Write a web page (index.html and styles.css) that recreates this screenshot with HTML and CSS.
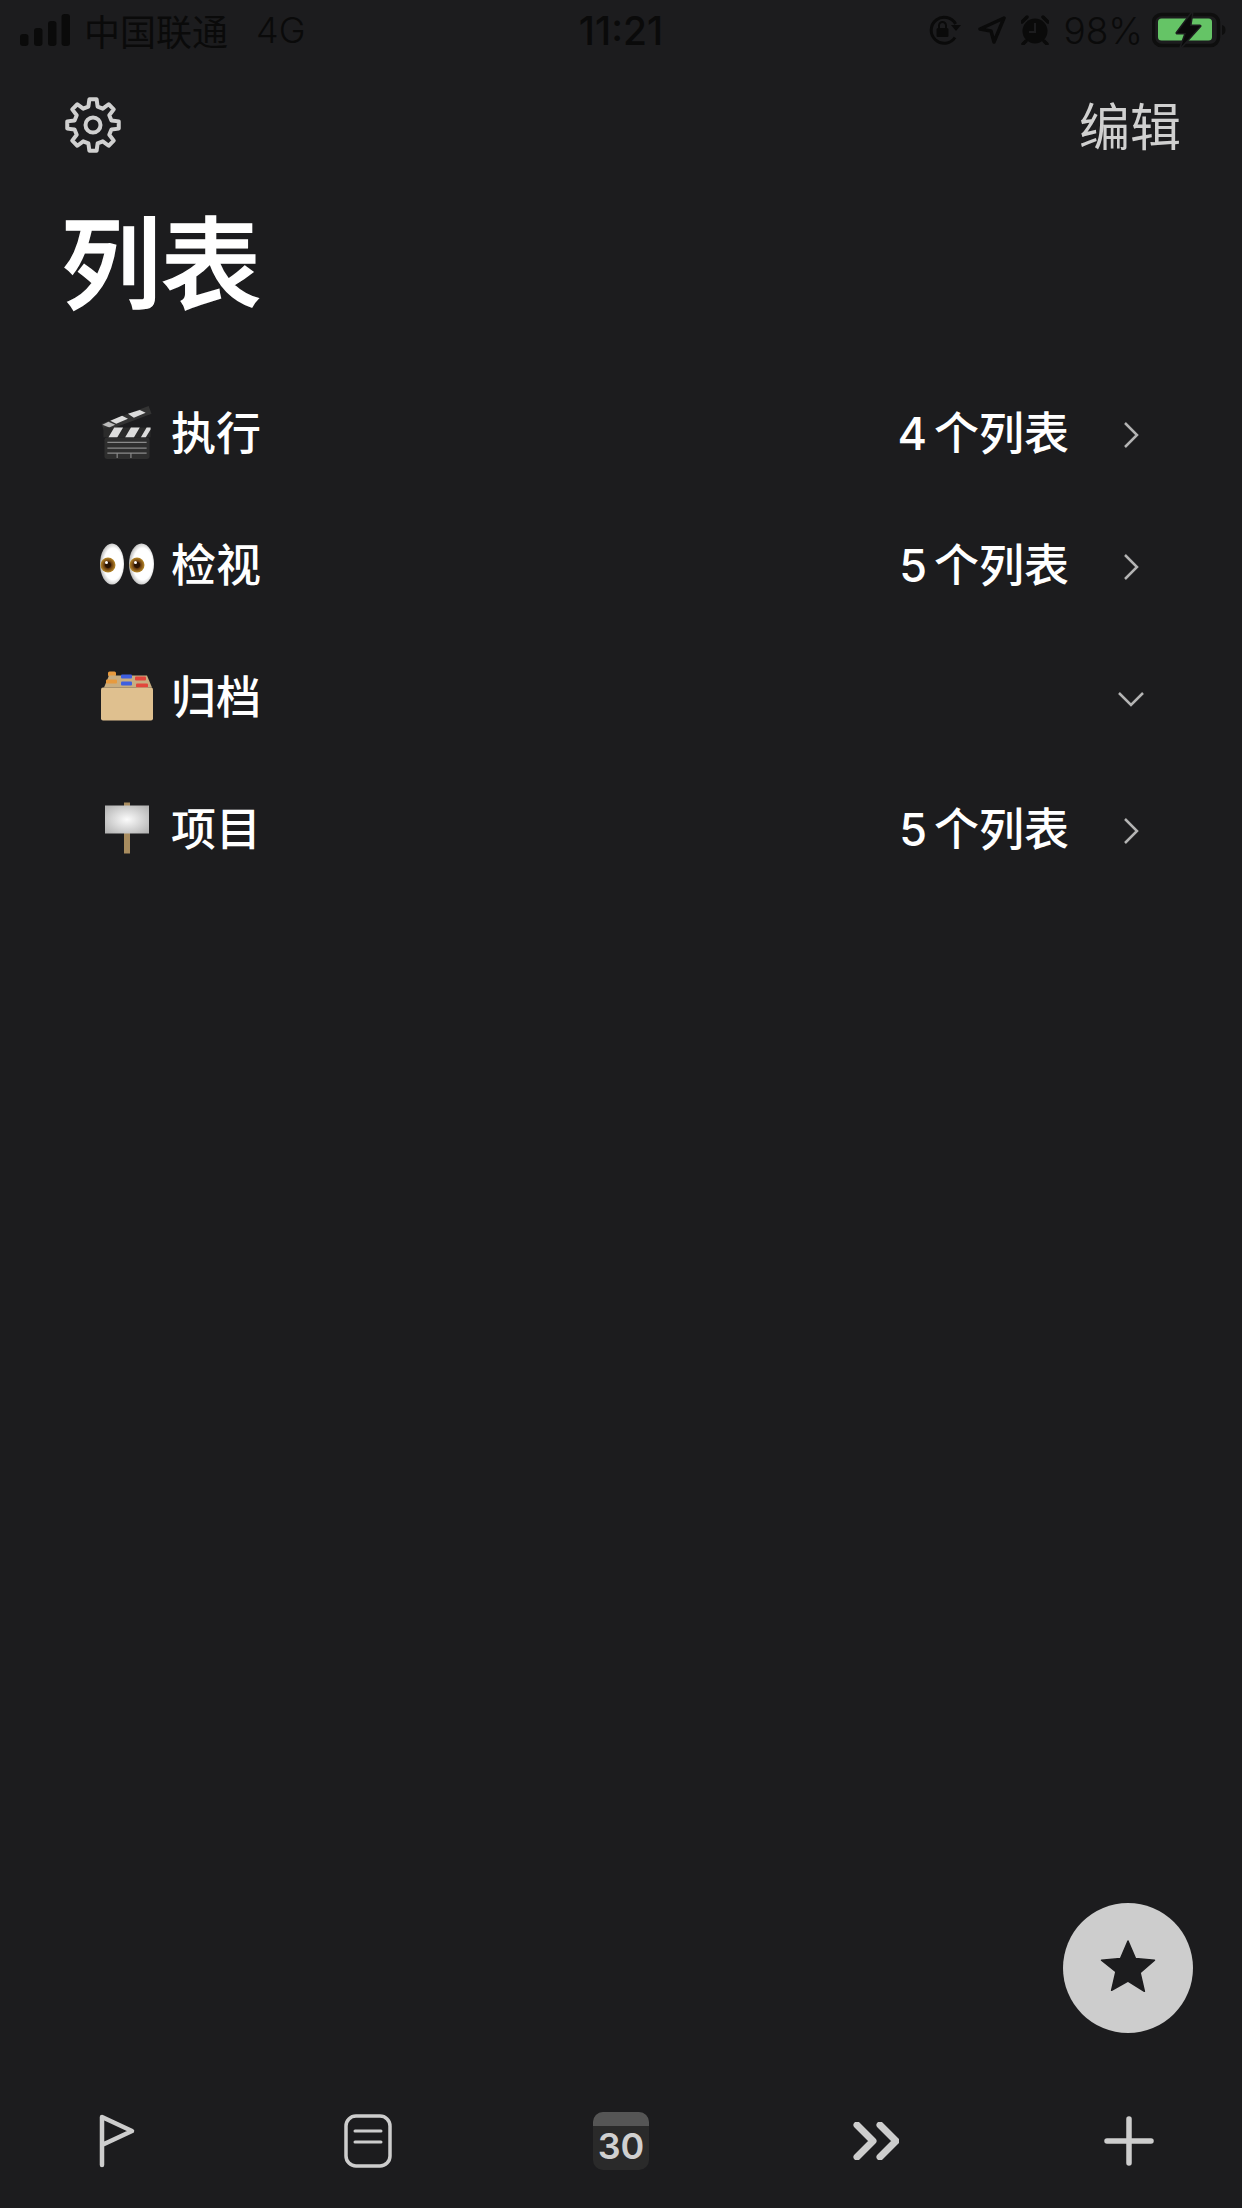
FILE: index.html
```html
<!DOCTYPE html>
<html lang="zh-CN">
<head>
    <meta charset="UTF-8">
    <meta name="viewport" content="width=device-width, initial-scale=1.0">
    <title>列表</title>
    <link rel="stylesheet" href="styles.css">
</head>
<body>
    <main class="app">
        <!-- status bar -->
        <header class="status">
            <div class="status-left">
                <svg class="signal" viewBox="0 0 50 32">
                    <rect x="0" y="20" width="8.500" height="12" rx="3"/>
                    <rect x="14" y="14" width="8.500" height="18" rx="3"/>
                    <rect x="28" y="7" width="8.500" height="25" rx="3"/>
                    <rect x="41.500" y="0" width="8.500" height="32" rx="3"/>
                </svg>
                <span class="carrier">中国联通</span>
                <span class="network">4G</span>
            </div>
            <div class="clock">11:21</div>
            <div class="status-right">
                <svg class="st-lock" viewBox="0 0 34 30">
                    <path d="M27 22.500A13 13 0 1 1 27.600 9" fill="none" stroke="#0a0a0a" stroke-width="3"/>
                    <path d="M23 10h10l-5 6z" fill="#0a0a0a"/>
                    <rect x="8.500" y="13" width="12" height="9" rx="1.500" fill="#0a0a0a"/>
                    <path d="M11 13v-2.500a3.500 3.500 0 0 1 7 0V13" fill="none" stroke="#0a0a0a" stroke-width="2"/>
                </svg>
                <svg class="st-loc" viewBox="0 0 28 28">
                    <path d="M26 2 2 13l11 2 3 11z" fill="none" stroke="#0a0a0a" stroke-width="3.500" stroke-linejoin="round"/>
                </svg>
                <svg class="st-alarm" viewBox="0 0 28 30">
                    <circle cx="14" cy="16" r="12.500" fill="#0a0a0a"/>
                    <path d="M1 7 6 2M27 7l-5-5M5 26l-3 3M23 26l3 3" stroke="#0a0a0a" stroke-width="3.500" stroke-linecap="round"/>
                    <path d="M14 8v9H8" fill="none" stroke="#1c1c1e" stroke-width="2"/>
                </svg>
                <span class="battery-pct">98%</span>
                <svg class="st-battery" viewBox="0 0 74 36">
                    <rect x="1.500" y="2.500" width="65" height="31" rx="8" fill="none" stroke="#0e0e0e" stroke-width="3.500"/>
                    <rect x="6" y="6.500" width="54" height="22" rx="3.500" fill="#65c466"/>
                    <path d="M70 13c2.500 .5 3.500 2.500 3.500 5s-1 4.500-3.500 5z" fill="#0e0e0e"/>
                    <path d="M40 1 25 21h9l-5 14 19-21H38z" fill="#0a0a0a" stroke="#1c1c1e" stroke-width="3" stroke-linejoin="round" paint-order="stroke"/>
                </svg>
            </div>
        </header>

        <!-- top nav -->
        <nav class="topnav">
            <svg class="gear" viewBox="-29 -29 58 58">
                <polygon points="18.44,-4.6 25.75,-3.62 25.75,3.62 18.44,4.6 16.29,9.79 20.77,15.65 15.65,20.77 9.79,16.29 4.6,18.44 3.62,25.75 -3.62,25.75 -4.6,18.44 -9.79,16.29 -15.65,20.77 -20.77,15.65 -16.29,9.79 -18.44,4.6 -25.75,3.62 -25.75,-3.62 -18.44,-4.6 -16.29,-9.79 -20.77,-15.65 -15.65,-20.77 -9.79,-16.29 -4.6,-18.44 -3.62,-25.75 3.62,-25.75 4.6,-18.44 9.79,-16.29 15.65,-20.77 20.77,-15.65 16.29,-9.79"/>
                <circle r="7.500"/>
            </svg>
            <span class="edit">编辑</span>
        </nav>

        <h1 class="title">列表</h1>

        <ul class="groups">
            <li class="group">
                <svg class="emoji" viewBox="0 0 54 55">
                    <path d="M1 19 49 1l3 8L4 27z" fill="#333"/>
                    <path d="M10 16l12-5 6 3-12 5zM28 9l12-4 6 3-12 5z" fill="#ddd"/>
                    <path d="M2 20l7 3 6-3-7-3z" fill="#bbb"/>
                    <rect x="3" y="23" width="48" height="10" fill="#2b2b2b"/>
                    <path d="M8 33l6-10h9l-6 10zM25 33l6-10h9l-6 10zM41 33l6-10h4v2l-5 8z" fill="#ddd"/>
                    <rect x="4" y="33" width="46" height="22" rx="3" fill="#2e2e2e"/>
                    <path d="M7 38h40M7 44h40M7 49h40M17 49v5M31 49v5" stroke="#8a8a8a" stroke-width="1.200"/>
                </svg>
                <span class="group-name">执行</span>
                <span class="group-count">4 个列表</span>
                <svg class="chev" viewBox="0 0 30 28"><path d="M9 2l12 12L9 26"/></svg>
            </li>
            <li class="group">
                <svg class="emoji" viewBox="0 0 54 42">
                    <defs>
                        <radialGradient id="eyeball" cx="55%" cy="50%" r="55%">
                            <stop offset="70%" stop-color="#fff"/>
                            <stop offset="100%" stop-color="#b5b5b5"/>
                        </radialGradient>
                        <radialGradient id="iris" cx="50%" cy="50%" r="50%">
                            <stop offset="35%" stop-color="#2a1505"/>
                            <stop offset="50%" stop-color="#6a3d10"/>
                            <stop offset="100%" stop-color="#b98a2a"/>
                        </radialGradient>
                    </defs>
                    <ellipse cx="12" cy="21" rx="12" ry="20.500" fill="url(#eyeball)"/>
                    <ellipse cx="41.500" cy="21" rx="12.500" ry="20.500" fill="url(#eyeball)"/>
                    <circle cx="8" cy="22" r="7.500" fill="url(#iris)"/>
                    <circle cx="37" cy="22" r="7.500" fill="url(#iris)"/>
                    <circle cx="6.500" cy="19.500" r="1.500" fill="#fff"/>
                    <circle cx="35.500" cy="19.500" r="1.500" fill="#fff"/>
                </svg>
                <span class="group-name">检视</span>
                <span class="group-count">5 个列表</span>
                <svg class="chev" viewBox="0 0 30 28"><path d="M9 2l12 12L9 26"/></svg>
            </li>
            <li class="group">
                <svg class="emoji emoji-box" viewBox="0 0 52 49">
                    <rect x="7" y="0" width="8" height="5" rx="1.500" fill="#e79a3e"/>
                    <path d="M3 16 8 4h38l5 12z" fill="#c8ad80"/>
                    <rect x="20" y="3" width="11" height="4" rx="1" fill="#3f5fe0"/>
                    <rect x="34" y="5" width="11" height="4" rx="1" fill="#e2463c"/>
                    <rect x="5" y="8" width="11" height="4" rx="1" fill="#e79a3e"/>
                    <rect x="20" y="10" width="11" height="4" rx="1" fill="#3f5fe0"/>
                    <rect x="35" y="12" width="12" height="4" rx="1" fill="#e2463c"/>
                    <rect x="0" y="16" width="52" height="33" rx="2" fill="#dfc08f"/>
                </svg>
                <span class="group-name">归档</span>
                <svg class="chev chev-down" viewBox="0 0 30 28"><path d="M3 8l12 12L27 8"/></svg>
            </li>
            <li class="group">
                <svg class="emoji emoji-sign" viewBox="0 0 44 51">
                    <defs>
                        <radialGradient id="board" cx="50%" cy="50%" r="65%">
                            <stop offset="0%" stop-color="#fbfbfb"/>
                            <stop offset="100%" stop-color="#b4b4b4"/>
                        </radialGradient>
                    </defs>
                    <rect x="19" y="0" width="6" height="51" fill="#a88c5f"/>
                    <rect x="0" y="3" width="44" height="28" fill="url(#board)"/>
                </svg>
                <span class="group-name">项目</span>
                <span class="group-count">5 个列表</span>
                <svg class="chev" viewBox="0 0 30 28"><path d="M9 2l12 12L9 26"/></svg>
            </li>
        </ul>

        <button class="fab">
            <svg viewBox="0 0 56 54"><path d="M28 1l7.500 17.500 19 1.700-14.400 12.500 4.300 18.600L28 41l-16.400 9.300 4.300-18.600L1.500 20.200l19-1.700z" fill="#1c1c1e" stroke="#1c1c1e" stroke-width="1.500" stroke-linejoin="round"/></svg>
        </button>

        <!-- tab bar -->
        <footer class="tabbar">
            <div class="tab">
                <svg class="tab-flag" viewBox="0 0 36 54"><path d="M3 51V3l30 14L3 31"/></svg>
            </div>
            <div class="tab tab-nudge">
                <svg class="tab-doc" viewBox="0 0 48 54">
                    <rect x="2" y="2" width="44" height="50" rx="10"/>
                    <path class="doc-lines" d="M11 17h26M11 28h26"/>
                </svg>
            </div>
            <div class="tab tab-nudge">
                <div class="cal">
                    <div class="cal-head"></div>
                    <div class="cal-day">30</div>
                </div>
            </div>
            <div class="tab">
                <svg class="tab-more" viewBox="0 0 46 38"><path d="M4 3l16 16L4 35M27 3l16 16-16 16"/></svg>
            </div>
            <div class="tab">
                <svg class="tab-plus" viewBox="0 0 50 50"><path d="M25 3v44M3 25h44"/></svg>
            </div>
        </footer>
    </main>
</body>
</html>
```

FILE: styles.css
```css
html, body {
    margin: 0;
    padding: 0;
}
body {
    background-color: #1c1c1e;
    font-family: "Inter", "Noto Sans CJK SC", sans-serif;
}
.app {
    position: relative;
    display: flex;
    flex-direction: column;
    width: 1242px;
    height: 2208px;
    overflow: hidden;
    background-color: #1c1c1e;
}

/* status bar */
.status {
    display: flex;
    align-items: center;
    justify-content: space-between;
    height: 60px;
    padding: 0 16px 0 20px;
    color: #0a0a0a;
    font-size: 36px;
}
.status-left, .status-right {
    display: flex;
    align-items: center;
    width: 400px;
}
.status-right {
    justify-content: flex-end;
}
.signal {
    width: 50px;
    height: 32px;
    fill: #0a0a0a;
}
.carrier {
    margin-left: 14px;
    font-family: "Noto Sans CJK SC", sans-serif;
    font-size: 36px;
    font-weight: 400;
}
.network {
    margin-left: 28px;
    font-weight: 300;
}
.clock {
    margin-right: 4px;
    font-size: 39px;
    font-weight: 500;
}
.st-lock {
    width: 34px;
    height: 30px;
}
.st-loc {
    width: 28px;
    height: 28px;
    margin-left: 16px;
}
.st-alarm {
    width: 28px;
    height: 30px;
    margin-left: 15px;
}
.battery-pct {
    margin-left: 14px;
    font-size: 37px;
    font-weight: 300;
}
.st-battery {
    width: 74px;
    height: 36px;
    margin-left: 9px;
}

/* nav + title */
.topnav {
    display: flex;
    align-items: center;
    justify-content: space-between;
    height: 130px;
    padding: 0 61px 0 64px;
}
.gear {
    width: 58px;
    height: 58px;
    fill: none;
    stroke: #d0d0d0;
    stroke-width: 4;
    stroke-linejoin: round;
}
.edit {
    margin-bottom: 2px;
    font-family: "Noto Sans CJK SC", sans-serif;
    font-size: 51px;
    font-weight: 400;
    color: #d0d0d0;
}
.title {
    margin: 18px 0 0 61px;
    font-family: "Noto Sans CJK SC", sans-serif;
    font-size: 100px;
    font-weight: 500;
    line-height: 100px;
    color: #fff;
    -webkit-text-stroke: 1.5px #fff;
}

/* groups */
.groups {
    margin: 58px 0 0;
    padding: 0 96px 0 100px;
    list-style: none;
}
.group {
    display: flex;
    align-items: center;
    height: 132px;
    color: #fff;
    font-size: 45px;
}
.emoji {
    flex: none;
    width: 54px;
    height: 54px;
    margin-right: 17px;
}
.emoji-sign {
    padding: 0 5px;
    box-sizing: border-box;
}
.emoji-box {
    padding: 0 1px;
    box-sizing: border-box;
}
.group-name {
    margin-bottom: 4px;
    font-family: "Noto Sans CJK SC", sans-serif;
    font-weight: 500;
}
.group-count {
    margin-left: auto;
    margin-bottom: 4px;
    font-family: "Inter", "Noto Sans CJK SC", sans-serif;
    font-weight: 500;
    word-spacing: -5px;
}
.chev {
    flex: none;
    width: 30px;
    height: 28px;
    margin-top: 5px;
    margin-left: 47px;
    fill: none;
    stroke: #b4b4b4;
    stroke-width: 2.5;
}
.chev-down {
    margin-left: auto;
}

/* floating button */
.fab {
    position: absolute;
    right: 49px;
    bottom: 175px;
    display: flex;
    align-items: center;
    justify-content: center;
    width: 130px;
    height: 130px;
    padding: 0 0 2px;
    border: none;
    border-radius: 50%;
    background-color: #cdcdcd;
}
.fab svg {
    width: 56px;
    height: 54px;
}

/* tab bar */
.tabbar {
    display: grid;
    grid-template-columns: repeat(5, 253px);
    align-items: center;
    justify-items: center;
    height: 134px;
    margin-top: auto;
    margin-left: -10px;
}
.tab {
    display: flex;
    align-items: center;
    justify-content: center;
}
.tab svg {
    fill: none;
    stroke: #cdcdcd;
    stroke-width: 4.5;
    stroke-linecap: round;
    stroke-linejoin: round;
}
.tab-nudge {
    margin-right: 3px;
}
.tab-flag {
    width: 36px;
    height: 54px;
}
.tab-doc {
    width: 48px;
    height: 54px;
}
.tab .tab-doc {
    stroke-width: 3.5;
}
.tab .doc-lines {
    stroke-width: 3;
}
.tab-more {
    width: 46px;
    height: 38px;
}
.tab .tab-more {
    stroke-width: 7;
}
.tab-plus {
    width: 50px;
    height: 50px;
}
.tab .tab-plus {
    stroke-width: 5.5;
}
.cal {
    width: 56px;
    height: 58px;
    border-radius: 10px;
    overflow: hidden;
    background-color: #2a2a2a;
}
.cal-head {
    height: 14px;
    background-color: #555;
}
.cal-day {
    font-size: 36px;
    font-weight: 600;
    line-height: 40px;
    text-align: center;
    color: #d0d0d0;
}
```
